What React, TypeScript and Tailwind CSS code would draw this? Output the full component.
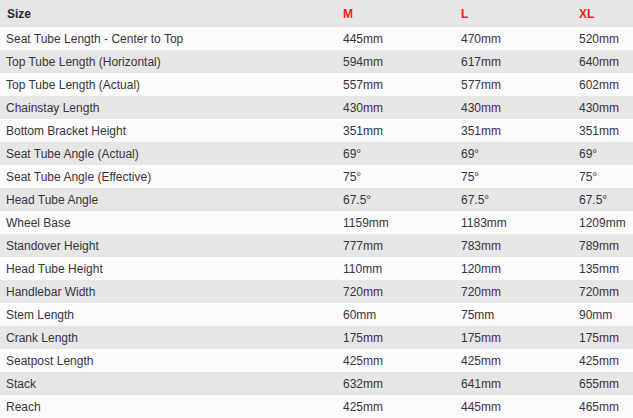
const ROWS: [string, string, string, string][] = [
    ['Seat Tube Length - Center to Top', '445mm', '470mm', '520mm'],
    ['Top Tube Length (Horizontal)', '594mm', '617mm', '640mm'],
    ['Top Tube Length (Actual)', '557mm', '577mm', '602mm'],
    ['Chainstay Length', '430mm', '430mm', '430mm'],
    ['Bottom Bracket Height', '351mm', '351mm', '351mm'],
    ['Seat Tube Angle (Actual)', '69°', '69°', '69°'],
    ['Seat Tube Angle (Effective)', '75°', '75°', '75°'],
    ['Head Tube Angle', '67.5°', '67.5°', '67.5°'],
    ['Wheel Base', '1159mm', '1183mm', '1209mm'],
    ['Standover Height', '777mm', '783mm', '789mm'],
    ['Head Tube Height', '110mm', '120mm', '135mm'],
    ['Handlebar Width', '720mm', '720mm', '720mm'],
    ['Stem Length', '60mm', '75mm', '90mm'],
    ['Crank Length', '175mm', '175mm', '175mm'],
    ['Seatpost Length', '425mm', '425mm', '425mm'],
    ['Stack', '632mm', '641mm', '655mm'],
    ['Reach', '425mm', '445mm', '465mm'],
];

export default function App() {
    return (
        <div className="w-[633px] h-[418px] overflow-hidden bg-white text-[12px] text-[#3a3340]" style={{ fontFamily: '"Liberation Sans", Arial, sans-serif' }}>
            {/* Header */}
            <div className="grid grid-cols-[337px_118px_118px_1fr] h-[27px] items-center bg-[#e6e6e6] font-bold">
                <div className="pl-[7px] text-[#2a2a33]">Size</div>
                {['M', 'L', 'XL'].map(s => <div key={s} className="pl-[6px] text-[#ff1a1a]">{s}</div>)}
            </div>
            {ROWS.map((r, i) => (
                <div key={r[0]} className={`grid grid-cols-[337px_118px_118px_1fr] h-[23px] items-center ${i % 2 === 0 ? 'bg-[#fbfbfb]' : 'bg-[#e6e6e6]'}`}>
                    {r.map((c, j) => <div key={j} className="pl-[6px] whitespace-nowrap">{c}</div>)}
                </div>
            ))}
        </div>
    );
}
